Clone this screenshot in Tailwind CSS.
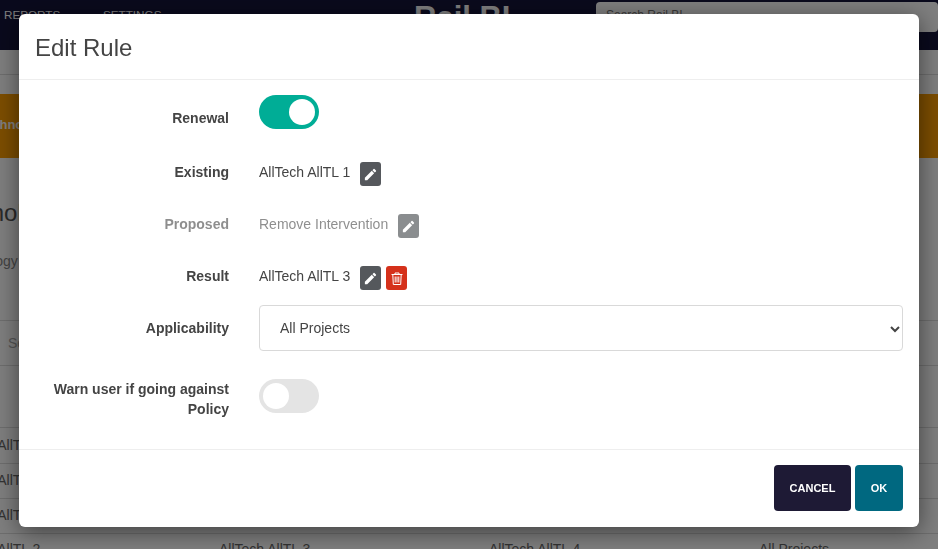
<!DOCTYPE html>
<html lang="en">
<head>
    <meta charset="UTF-8">
    <title>Edit Rule</title>
    <script src="https://cdn.jsdelivr.net/npm/@tailwindcss/browser@4"></script>
</head>
<body class="h-[549px] overflow-hidden bg-white font-['Liberation_Sans',sans-serif] text-[14px] text-[#444]">

    <!-- page behind the modal -->
    <header class="flex h-[50px] items-start overflow-hidden bg-[#14143a]">
        <a class="ml-[4px] mt-[7px] w-[99px] text-[11.7px] leading-[16px] text-white">REPORTS</a>
        <a class="mt-[7px] w-[311px] text-[11.7px] leading-[16px] text-white">SETTINGS</a>
        <div class="w-[182px] text-[31px] font-bold leading-[36px] text-white">Rail BI</div>
        <div class="mt-[2px] h-[30px] flex-1 rounded-[4px] bg-white pl-[10px] text-[12px] leading-[26px] text-[#777]">Search Rail BI...</div>
    </header>
    <div class="h-[24px]"></div>
    <div class="h-[20px] border-t border-[#ddd]"></div>
    <div class="-ml-[24px] h-[64px] bg-[#fb9c00] pl-[2px] text-[13px] font-bold leading-[62px] text-white">Technology</div>
    <div>
        <h2 class="-ml-[60px] mt-[38px] text-[24px] leading-[34px] text-[#555]">Technology</h2>
        <p class="-ml-[53px] mt-[21px] text-[14px] leading-[20px] text-[#888]">Technology</p>
    </div>
    <div class="mt-[49px] h-[46px] border-y border-[#ddd] pl-[8px] text-[14px] leading-[44px] text-[#aaa]">Search</div>
    <div class="h-[61px]"></div>
    <div class="-ml-[51px] w-[1100px] text-[#666]">
        <div class="grid h-[36px] grid-cols-[270px_270px_270px_270px] border-t border-[#ddd] leading-[34px]">
            <span>AllTech AllTL 1</span><span>AllTech AllTL 2</span><span>AllTech AllTL 3</span><span>All Projects</span>
        </div>
        <div class="grid h-[35px] grid-cols-[270px_270px_270px_270px] border-t border-[#ddd] leading-[33px]">
            <span>AllTech AllTL 1</span><span>AllTech AllTL 2</span><span>AllTech AllTL 3</span><span>All Projects</span>
        </div>
        <div class="grid h-[35px] grid-cols-[270px_270px_270px_270px] border-t border-[#ddd] leading-[33px]">
            <span>AllTech AllTL 1</span><span>AllTech AllTL 3</span><span>AllTech AllTL 4</span><span>All Projects</span>
        </div>
        <div class="grid h-[35px] grid-cols-[270px_270px_270px_270px] border-t border-[#ddd] leading-[30px]">
            <span>AllTech AllTL 2</span><span>AllTech AllTL 3</span><span>AllTech AllTL 4</span><span>All Projects</span>
        </div>
    </div>

    <div class="fixed inset-0 bg-black/50"></div>

    <!-- modal -->
    <div class="absolute left-[19px] top-[14px] w-[900px] rounded-[6px] bg-white shadow-[0_5px_25px_rgba(0,0,0,0.5)]">
        <div class="h-[66px] border-b border-[#eee] pl-[16px] text-[24px] leading-[67px] text-[#444]">Edit Rule</div>

        <div class="h-[369px] pt-[15px] pr-[16px]">
            <div class="flex h-[67px] gap-[30px]">
                <label class="w-[210px] pt-[13px] text-right font-bold leading-[20px]">Renewal</label>
                <div class="flex h-[34px] w-[60px] items-center justify-end rounded-full bg-[#00ad96] pr-[4px]">
                    <span class="size-[26px] rounded-full bg-white"></span>
                </div>
            </div>

            <div class="flex h-[52px] gap-[30px]">
                <label class="w-[210px] text-right font-bold leading-[20px]">Existing</label>
                <div class="flex h-[24px] items-center gap-[10px] leading-[20px]">
                    <span class="-mt-[4px]">AllTech AllTL 1</span>
                    <button class="flex h-[24px] w-[21px] items-center justify-center rounded-[3px] bg-[#55585c]">
                        <svg class="size-[15px]" viewBox="0 0 24 24" fill="#fff"><path d="M3 17.25V21h3.75L17.81 9.94l-3.75-3.75L3 17.25zM20.71 7.04a1 1 0 0 0 0-1.41l-2.34-2.34a1 1 0 0 0-1.41 0l-1.83 1.83 3.75 3.75 1.83-1.83z"/></svg>
                    </button>
                </div>
            </div>

            <div class="flex h-[52px] gap-[30px] opacity-60">
                <label class="w-[210px] text-right font-bold leading-[20px]">Proposed</label>
                <div class="flex h-[24px] items-center gap-[10px] leading-[20px]">
                    <span class="-mt-[4px]">Remove Intervention</span>
                    <button class="flex h-[24px] w-[21px] items-center justify-center rounded-[3px] bg-[#3e4246]">
                        <svg class="size-[15px]" viewBox="0 0 24 24" fill="#fff"><path d="M3 17.25V21h3.75L17.81 9.94l-3.75-3.75L3 17.25zM20.71 7.04a1 1 0 0 0 0-1.41l-2.34-2.34a1 1 0 0 0-1.41 0l-1.83 1.83 3.75 3.75 1.83-1.83z"/></svg>
                    </button>
                </div>
            </div>

            <div class="flex h-[39px] gap-[30px]">
                <label class="w-[210px] text-right font-bold leading-[20px]">Result</label>
                <div class="flex h-[24px] items-center leading-[20px]">
                    <span class="-mt-[4px] mr-[10px]">AllTech AllTL 3</span>
                    <button class="mr-[5px] flex h-[24px] w-[21px] items-center justify-center rounded-[3px] bg-[#55585c]">
                        <svg class="size-[15px]" viewBox="0 0 24 24" fill="#fff"><path d="M3 17.25V21h3.75L17.81 9.94l-3.75-3.75L3 17.25zM20.71 7.04a1 1 0 0 0 0-1.41l-2.34-2.34a1 1 0 0 0-1.41 0l-1.83 1.83 3.75 3.75 1.83-1.83z"/></svg>
                    </button>
                    <button class="flex h-[24px] w-[21px] items-center justify-center rounded-[3px] bg-[#d5311b]">
                        <svg class="h-[13px] w-[12px]" viewBox="0 0 12 13" fill="none" stroke="#fff" stroke-width="1"><path d="M0.5 2.5h11M4 2.5V1h4v1.5M1.8 2.5l.5 10h7.4l.5-10M4.2 4.5v6M6 4.5v6M7.8 4.5v6"/></svg>
                    </button>
                </div>
            </div>

            <div class="mb-[28px] flex h-[46px] items-center gap-[30px]">
                <label class="w-[210px] text-right font-bold leading-[20px]">Applicability</label>
                <div class="relative flex-1">
                    <select class="h-[46px] w-full appearance-none rounded-[4px] border border-[#d9d9d9] bg-white pl-[20px] text-[14px] text-[#444]">
                        <option>All Projects</option>
                    </select>
                    <svg class="pointer-events-none absolute right-[3px] top-[19px] size-[10px]" viewBox="0 0 10 10" fill="none" stroke="#444" stroke-width="2"><path d="M1 3l4 4 4-4"/></svg>
                </div>
            </div>

            <div class="flex gap-[30px]">
                <label class="w-[210px] pl-[30px] text-right font-bold leading-[20px]">Warn user if going against Policy</label>
                <div class="flex h-[34px] w-[60px] items-center rounded-full bg-[#e4e4e4] pl-[4px]">
                    <span class="size-[26px] rounded-full bg-white"></span>
                </div>
            </div>
        </div>

        <div class="flex h-[78px] justify-end gap-[4px] border-t border-[#eee] pr-[16px] pt-[15px]">
            <button class="h-[46px] w-[77px] rounded-[4px] bg-[#1e1a35] text-[11px] font-bold text-white">CANCEL</button>
            <button class="h-[46px] w-[48px] rounded-[4px] bg-[#006880] text-[11px] font-bold text-white">OK</button>
        </div>
    </div>

</body>
</html>
